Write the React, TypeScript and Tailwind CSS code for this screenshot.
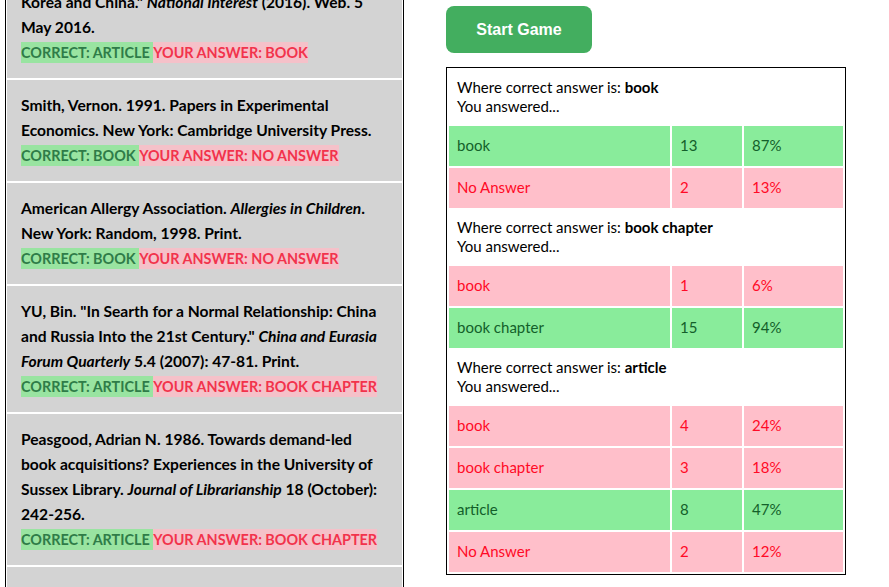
import React from "react";

type Entry = {
  text: React.ReactNode;
  correct: string;
  answer: string;
};

const entries: Entry[] = [
  {
    text: (
      <>
        Kang, David C. "South Korea's Relations with North
        <br />
        Korea and China." <i>National Interest</i> (2016). Web. 5
        <br />
        May 2016.
      </>
    ),
    correct: "ARTICLE",
    answer: "BOOK",
  },
  {
    text: (
      <>
        Smith, Vernon. 1991. Papers in Experimental
        <br />
        Economics. New York: Cambridge University Press.
      </>
    ),
    correct: "BOOK",
    answer: "NO ANSWER",
  },
  {
    text: (
      <>
        American Allergy Association. <i>Allergies in Children</i>.
        <br />
        New York: Random, 1998. Print.
      </>
    ),
    correct: "BOOK",
    answer: "NO ANSWER",
  },
  {
    text: (
      <>
        YU, Bin. "In Searth for a Normal Relationship: China
        <br />
        and Russia Into the 21st Century." <i>China and Eurasia</i>
        <br />
        <i>Forum Quarterly</i> 5.4 (2007): 47-81. Print.
      </>
    ),
    correct: "ARTICLE",
    answer: "BOOK CHAPTER",
  },
  {
    text: (
      <>
        Peasgood, Adrian N. 1986. Towards demand-led
        <br />
        book acquisitions? Experiences in the University of
        <br />
        Sussex Library. <i>Journal of Librarianship</i> 18 (October):
        <br />
        242-256.
      </>
    ),
    correct: "ARTICLE",
    answer: "BOOK CHAPTER",
  },
  {
    text: (
      <>
        Schroeder, Robert. 2012. "Book Collecting in the Digital
        <br />
        Age." <i>Library Trends</i> 61.1 (2012): 12-29. Print.
      </>
    ),
    correct: "ARTICLE",
    answer: "BOOK",
  },
];

type Row = { label: string; count: number; pct: string; right: boolean };

const groups: { type: string; rows: Row[] }[] = [
  {
    type: "book",
    rows: [
      { label: "book", count: 13, pct: "87%", right: true },
      { label: "No Answer", count: 2, pct: "13%", right: false },
    ],
  },
  {
    type: "book chapter",
    rows: [
      { label: "book", count: 1, pct: "6%", right: false },
      { label: "book chapter", count: 15, pct: "94%", right: true },
    ],
  },
  {
    type: "article",
    rows: [
      { label: "book", count: 4, pct: "24%", right: false },
      { label: "book chapter", count: 3, pct: "18%", right: false },
      { label: "article", count: 8, pct: "47%", right: true },
      { label: "No Answer", count: 2, pct: "12%", right: false },
    ],
  },
];

const CitationItem = ({ entry }: { entry: Entry }) => {
  return (
    <div className="bg-[#d3d3d3] pl-[14px] pr-2 pt-[13px] pb-[13px] whitespace-nowrap">
      <div className="text-[15.6px] font-bold leading-[25px] text-black">
        {entry.text}
        <br />
        <span className="inline-block text-[14.4px] leading-[21px] bg-[#99e4a1] text-[#2f7c48] uppercase">
          CORRECT: {entry.correct}&nbsp;
        </span>
        <span className="inline-block text-[14.4px] leading-[21px] bg-[#f5c1c9] text-[#f2334c] uppercase">
          YOUR ANSWER: {entry.answer}
        </span>
      </div>
    </div>
  );
};

const ResultsTable = () => {
  return (
    <table className="w-[400px] border border-black border-separate border-spacing-[2px] text-[15px] leading-[19px]">
      <tbody>
        {groups.map((g) => (
          <React.Fragment key={g.type}>
            <tr>
              <td colSpan={3} className="h-[54px] pl-[8px] py-[8px] text-black">
                Where correct answer is: <b>{g.type}</b>
                <br />
                You answered...
              </td>
            </tr>
            {g.rows.map((r, i) => {
              const cell = r.right
                ? "bg-[#89ec9b] text-[#13602a]"
                : "bg-[#ffbfca] text-[#ff0a26]";
              return (
                <tr key={i}>
                  <td className={`${cell} w-[221px] h-[40px] pl-[8px] pb-[1px]`}>{r.label}</td>
                  <td className={`${cell} w-[70px] h-[40px] pl-[8px] pb-[1px]`}>{r.count}</td>
                  <td className={`${cell} h-[40px] pl-[8px] pb-[1px]`}>{r.pct}</td>
                </tr>
              );
            })}
          </React.Fragment>
        ))}
      </tbody>
    </table>
  );
};

export default function App() {
  return (
    <div className="h-[587px] w-[889px] overflow-hidden bg-white flex font-['Lato',sans-serif]">
      {/* list is scrolled, first entry runs off the top */}
      <div className="ml-[5px] w-[399px] shrink-0 -mt-[50px] self-start border border-black p-[1px] bg-white flex flex-col gap-[2px]">
        {entries.map((e, i) => (
          <CitationItem key={i} entry={e} />
        ))}
      </div>
      <div className="ml-[42px] pt-[6px] flex flex-col">
        <button className="w-[146px] h-[47px] pt-[1px] rounded-[8px] bg-[#43ae5f] text-white text-[16px] font-bold font-['Liberation_Sans',sans-serif]">
          Start Game
        </button>
        <div className="mt-[14px]">
          <ResultsTable />
        </div>
      </div>
    </div>
  );
}
